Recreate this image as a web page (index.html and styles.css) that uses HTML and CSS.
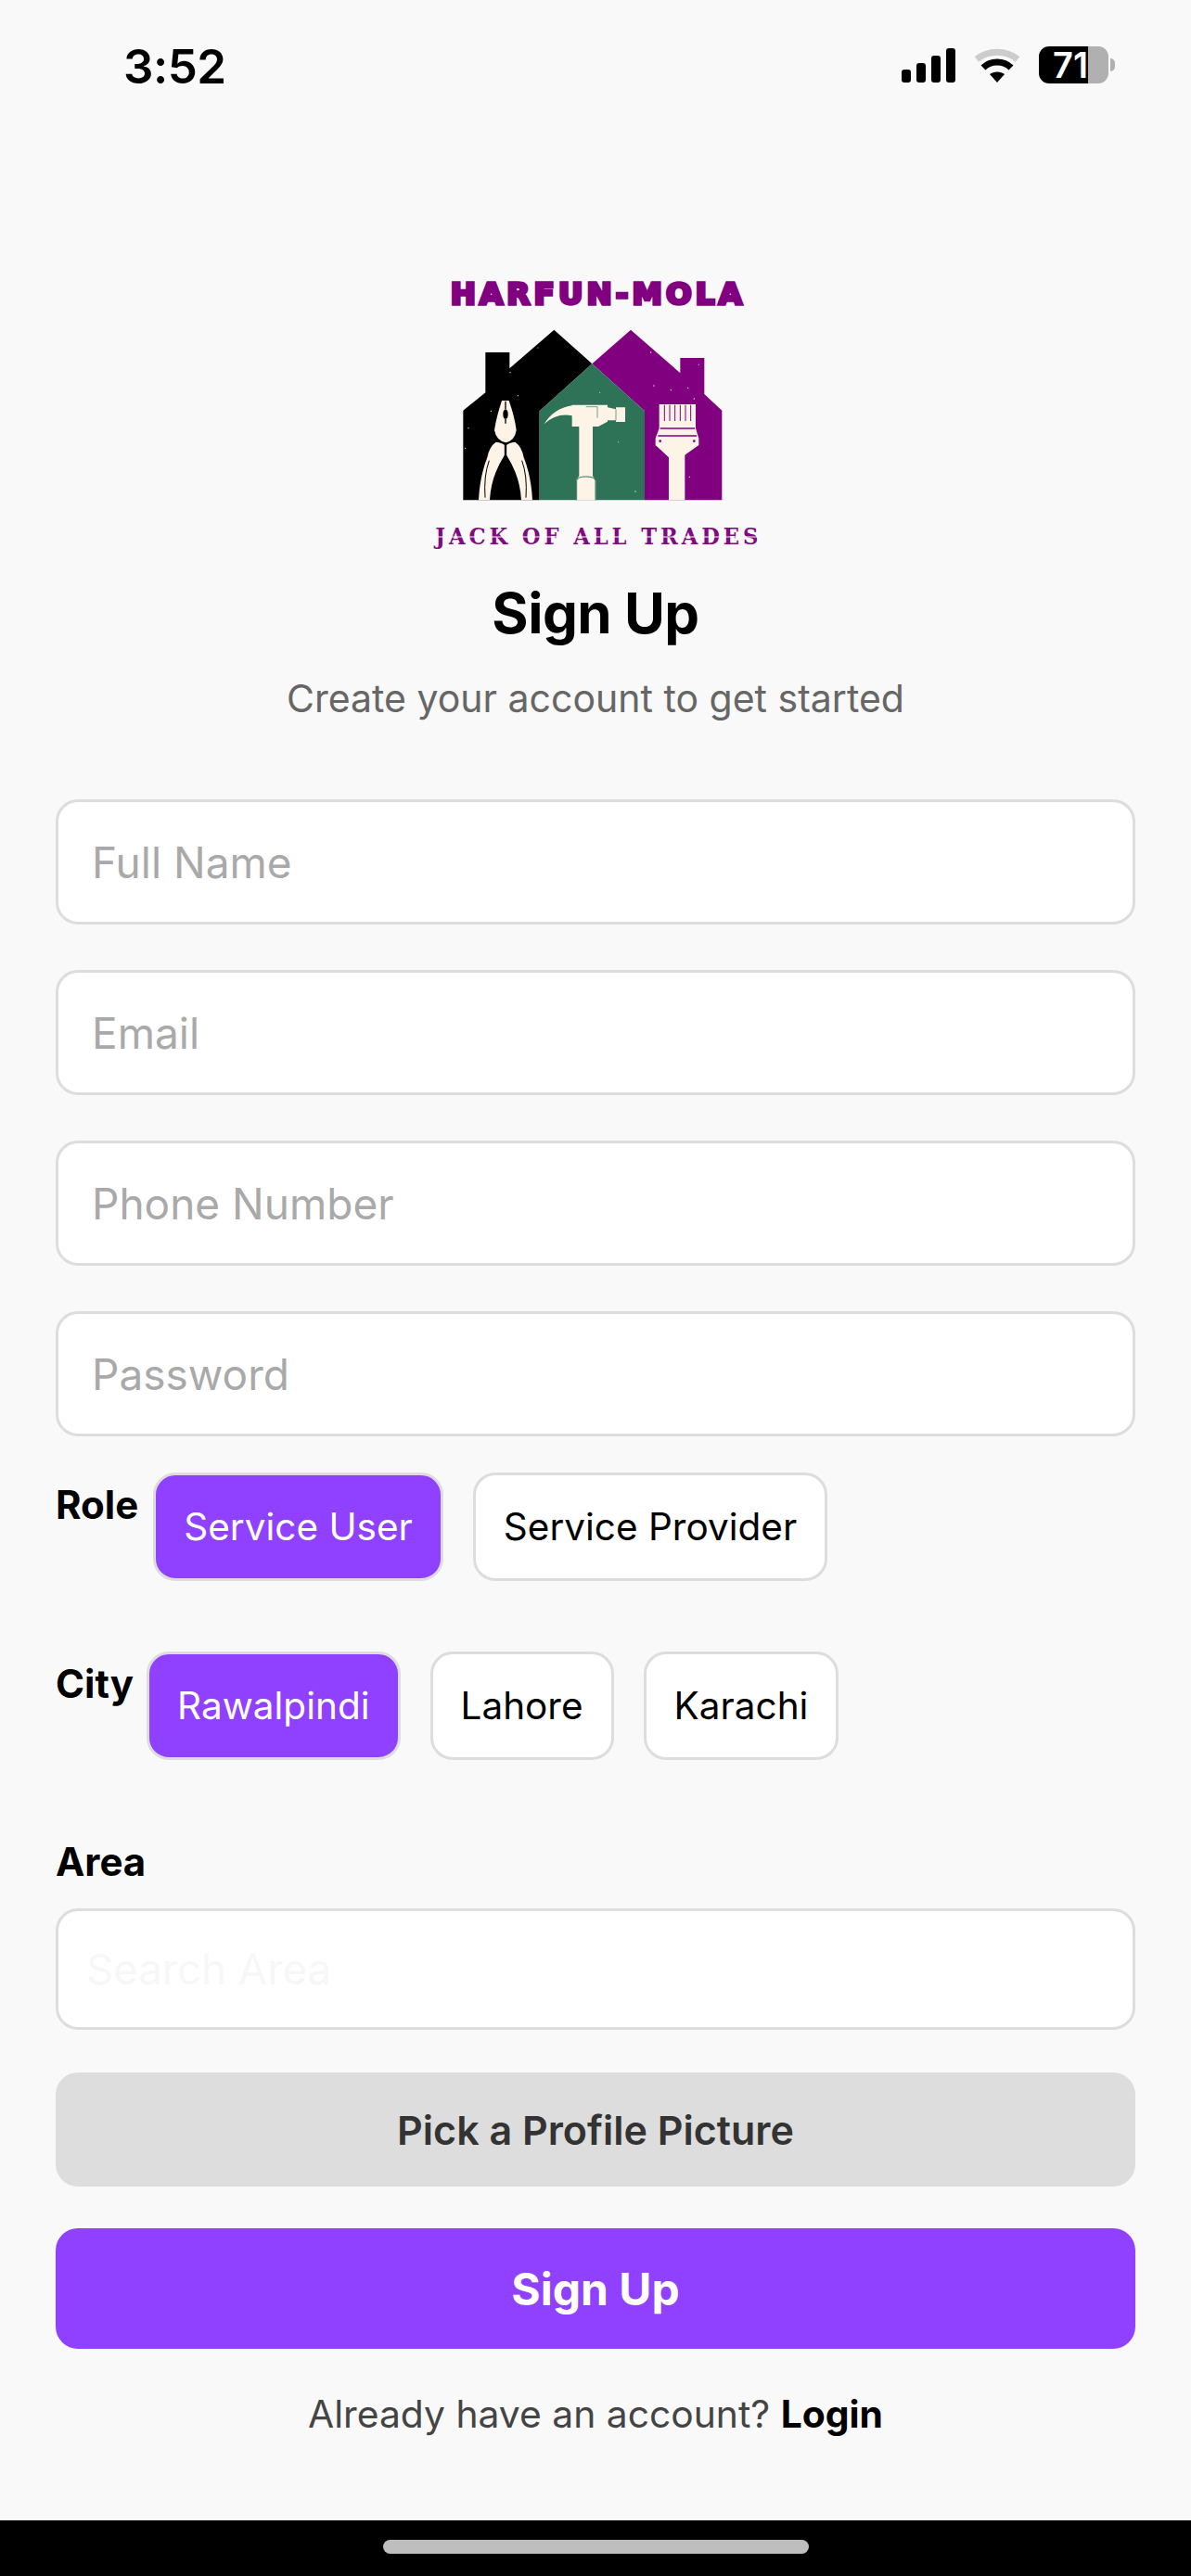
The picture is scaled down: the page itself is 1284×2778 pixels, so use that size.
FILE: index.html
```html
<!DOCTYPE html>
<html lang="en">
<head>
  <meta charset="UTF-8">
  <meta name="viewport" content="width=device-width, initial-scale=1.0">
  <title>Sign Up</title>
  <link rel="stylesheet" href="styles.css">
</head>
<body>
  <div class="status-bar">
    <span class="clock">3:52</span>
    <div class="status-icons">
      <div class="signal"><i class="s1"></i><i class="s2"></i><i class="s3"></i><i class="s4"></i></div>
      <svg class="wifi" width="50" height="37" viewBox="0 0 50 37">
        <path d="M3 12 C15 1.5 35 1.5 47 12" fill="none" stroke="#cccccc" stroke-width="7"/>
        <path d="M10 21 C18 13 32 13 40 21" fill="none" stroke="#000" stroke-width="7"/>
        <path d="M17 28 C21 24.5 29 24.5 33 28 L25 37 Z" fill="#000"/>
      </svg>
      <div class="battery-wrap">
        <div class="battery"><div class="battery-fill">71</div><div class="battery-rest"></div></div>
        <div class="battery-nub"></div>
      </div>
    </div>
  </div>

  <main class="page">
    <svg class="logo" viewBox="0 0 1230 960" width="410" height="320">
      <text class="logo-title" x="137" y="145" textLength="955" lengthAdjust="spacingAndGlyphs">HARFUN-MOLA</text>
      <!-- houses -->
      <path d="M178 778V488L250 430V300H328V352L472 227L595 337L425 490V778Z" fill="#000"/>
      <path d="M595 337L720 227L880 367V318H958V435L1015 488V778H765V490Z" fill="#800080"/>
      <path d="M425 490L595 337L765 490V778H425Z" fill="#2e7358"/>
      <!-- speckle -->
      <g fill="#fdf3e7">
        <circle cx="268" cy="490" r="2"/><circle cx="355" cy="440" r="2"/><circle cx="195" cy="545" r="2"/>
        <circle cx="420" cy="285" r="1.5"/><circle cx="185" cy="610" r="2"/><circle cx="330" cy="365" r="2"/>
        <circle cx="785" cy="300" r="2"/><circle cx="795" cy="408" r="2"/><circle cx="850" cy="422" r="2"/>
        <circle cx="905" cy="415" r="2"/><circle cx="925" cy="450" r="2"/><circle cx="940" cy="340" r="1.5"/>
        <circle cx="910" cy="703" r="2"/><circle cx="735" cy="750" r="2"/><circle cx="620" cy="430" r="1.5"/>
        <circle cx="680" cy="590" r="1.5"/>
      </g>
      <!-- pliers -->
      <g fill="#fdf3e7">
        <path d="M303 456H326Q345 510 350 552Q345 585 316 592Q285 585 279 552Q285 510 303 456Z"/>
        <path d="M284 590Q262 605 256 640Q232 700 228 778H264Q268 700 312 632Q314 610 312 600Q305 592 284 590Z"/>
        <path d="M346 590Q368 605 374 640Q398 700 402 778H366Q362 700 318 632Q316 610 318 600Q325 592 346 590Z"/>
      </g>
      <path d="M315 458V485M315 515V530" stroke="#000" stroke-width="4" fill="none"/>
      <ellipse cx="315" cy="500" rx="8" ry="15" fill="#000"/>
      <path d="M315 597V640" stroke="#000" stroke-width="7" fill="none"/>
      <path d="M262 650Q244 700 249 770M368 650Q386 700 381 770" stroke="#000" stroke-width="3" fill="none"/>
      <!-- hammer -->
      <path d="M530 470H645V478L672 484V478H702V525H672V520L645 520V524L615 540H597V700L607 715V778H543V715L553 700V540H530V505Q480 495 440 532Q470 482 530 472Z" fill="#fdf3e7"/>
      <path d="M575 476H612V512M672 484V520" stroke="#2e7358" stroke-width="2" fill="none"/>
      <path d="M545 778V715Q548 702 575 702Q604 702 606 715V778" stroke="#2e7358" stroke-width="3" fill="none"/>
      <!-- brush -->
      <path d="M812 468H930V545L940 578V600L895 632V778H843V640L800 600V578L812 545Z" fill="#fdf3e7"/>
      <path d="M829 470V522M846 470V522M863 470V522M880 470V522M897 470V522M914 470V522" stroke="#800080" stroke-width="3" fill="none"/>
      <path d="M815 546H927M808 570H933" stroke="#800080" stroke-width="4" fill="none"/>
      <circle cx="815" cy="587" r="4" fill="#800080"/>
      <circle cx="925" cy="587" r="4" fill="#800080"/>
      <text class="logo-tag" x="88" y="921" textLength="1056" lengthAdjust="spacingAndGlyphs">JACK OF ALL TRADES</text>
      <path class="logo-cut" d="M80 897H1135"/>
    </svg>

    <h1 class="title">Sign Up</h1>
    <p class="subtitle">Create your account to get started</p>

    <form class="form">
      <div class="field">Full Name</div>
      <div class="field">Email</div>
      <div class="field">Phone Number</div>
      <div class="field">Password</div>

      <div class="choice-row role-row">
        <span class="choice-label">Role</span>
        <div class="chips">
          <span class="chip active">Service User</span>
          <span class="chip">Service Provider</span>
        </div>
      </div>

      <div class="choice-row city-row">
        <span class="choice-label">City</span>
        <div class="chips">
          <span class="chip active">Rawalpindi</span>
          <span class="chip">Lahore</span>
          <span class="chip">Karachi</span>
        </div>
      </div>

      <div class="area-label">Area</div>
      <div class="field area-field">Search Area</div>

      <div class="btn-pick">Pick a Profile Picture</div>
      <div class="btn-signup">Sign Up</div>
    </form>

    <p class="login-line">Already have an account? <b>Login</b></p>
  </main>

  <div class="home-strip"><div class="home-bar"></div></div>
</body>
</html>
```

FILE: styles.css
```css
* { box-sizing: border-box; }

body {
  margin: 0;
  height: 2778px;
  display: flex;
  flex-direction: column;
  background: #f9f9f9;
  color: #000;
  font-family: Inter, "Liberation Sans", sans-serif;
  overflow: hidden;
}

/* status bar */
.status-bar {
  height: 150px;
  flex: none;
  display: flex;
  justify-content: space-between;
  align-items: flex-start;
  padding: 44px 82px 0 133px;
}
.clock { font-size: 51px; line-height: 56px; font-weight: 600; letter-spacing: -0.5px; }
.status-icons { display: flex; align-items: flex-start; gap: 20px; padding-top: 8px; }
.signal { display: flex; align-items: flex-end; gap: 6px; height: 37px; }
.signal i { display: block; width: 10px; background: #000; border-radius: 3px; }
.s1 { height: 14px; }
.s2 { height: 21px; }
.s3 { height: 29px; }
.s4 { height: 37px; }
.battery-wrap { display: flex; align-items: center; gap: 2px; margin-top: -2px; }
.battery { display: flex; width: 75px; height: 40px; }
.battery-fill {
  width: 53px;
  height: 40px;
  background: #000;
  border-radius: 11px 0 0 11px;
  color: #fff;
  font-size: 38px;
  line-height: 40px;
  font-weight: 600;
  text-align: right;
  white-space: nowrap;
}
.battery-rest { flex: 1; background: #b0b0b0; border-radius: 0 11px 11px 0; }
.battery-nub { width: 5px; height: 14px; background: #b0b0b0; border-radius: 0 5px 5px 0; }

/* logo and heading */
.page { flex: 1; display: flex; flex-direction: column; align-items: center; padding: 0 60px; }
.logo { display: block; margin: 130px 0 0 6px; flex: none; }
.logo-title {
  font-family: "DejaVu Sans", sans-serif;
  font-weight: 700;
  font-size: 94px;
  letter-spacing: 12px;
  fill: #800080;
  stroke: #800080;
  stroke-width: 10px;
}
.logo-tag {
  font-family: "DejaVu Serif", serif;
  font-weight: 700;
  font-size: 70px;
  letter-spacing: 12px;
  fill: #800a80;
}
.logo-cut { fill: none; stroke: #f9f9f9; stroke-width: 3px; }
.title { margin: 25px 0 0; font-size: 60px; line-height: 72px; font-weight: 700; letter-spacing: -0.5px; }
.subtitle { margin: 30px 0 0; font-size: 41px; line-height: 52px; color: #666; }

/* form */
.form { width: 100%; margin-top: 83px; }
.field {
  height: 135px;
  margin-bottom: 49px;
  padding: 0 36px;
  display: flex;
  align-items: center;
  background: #fff;
  border: 3px solid #ddd;
  border-radius: 24px;
  font-size: 46px;
  color: #a9a9a9;
}
.choice-row { display: flex; align-items: flex-start; }
.choice-label { font-size: 42px; line-height: 50px; font-weight: 700; margin-top: 10px; margin-right: 16px; }
.city-row .choice-label { margin-right: 14px; }
.chips { display: flex; gap: 32px; }
.chip {
  height: 117px;
  padding: 0 30px;
  display: flex;
  align-items: center;
  background: #fff;
  border: 3px solid #ddd;
  border-radius: 24px;
  font-size: 40.5px;
  color: #000;
}
.chip.active { background: #9040ff; color: #fff; }
.role-row { margin-top: -10px; }
.city-row { margin-top: 76px; }
.area-label { margin-top: 85px; font-size: 42px; line-height: 50px; font-weight: 700; }
.area-field { height: 131px; margin: 25px 0 0; padding: 0 30px; font-size: 45.5px; color: #f7f7f9; }
.btn-pick {
  height: 123px;
  margin-top: 46px;
  display: flex;
  align-items: center;
  justify-content: center;
  background: #ddd;
  border-radius: 24px;
  font-size: 43px;
  font-weight: 600;
  color: #333;
}
.btn-signup {
  height: 130px;
  margin-top: 45px;
  display: flex;
  align-items: center;
  justify-content: center;
  background: #9040ff;
  border-radius: 24px;
  font-size: 48px;
  font-weight: 700;
  color: #fff;
}
.login-line { margin: 44px 0 0; text-align: center; font-size: 40.8px; line-height: 52px; color: #444; }
.login-line b { color: #000; font-weight: 700; }

/* home indicator */
.home-strip { height: 60px; flex: none; background: #000; display: flex; justify-content: center; padding-top: 21px; }
.home-bar { width: 459px; height: 15px; background: #bebebe; border-radius: 8px; }
```
